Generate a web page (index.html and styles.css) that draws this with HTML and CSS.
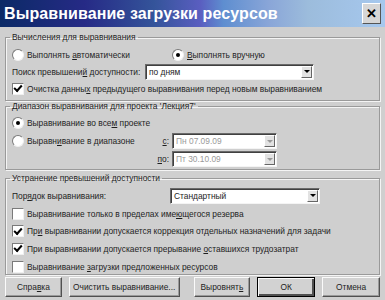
FILE: index.html
```html
<!DOCTYPE html>
<html>
<head>
  <title>Выравнивание загрузки ресурсов</title>
  <meta charset="utf-8">
  <link rel="stylesheet" href="styles.css">
</head>
<body>
  <div class="window">
    <div class="titlebar">
      <span class="title">Выравнивание загрузки ресурсов</span>
      <span class="close">✕</span>
    </div>
    <div class="content">
      <fieldset class="group group-calc">
        <legend>Вычисления для выравнивания</legend>
        <div class="row">
          <span class="option option-wide"><span class="radio"></span><span>Выполнять <u>а</u>втоматически</span></span>
          <span class="option"><span class="radio checked"></span><span><u>В</u>ыполнять вручную</span></span>
        </div>
        <div class="row">
          <span class="label label-search">Поиск превышени<u>й</u> доступности:</span>
          <span class="select select-search"><span class="value">по дням</span><span class="arrow"></span></span>
        </div>
        <div class="row">
          <span class="option"><span class="check checked"></span><span>Очистка данны<u>х</u> предыдущего выравнивания перед новым выравниванием</span></span>
        </div>
      </fieldset>

      <fieldset class="group group-range">
        <legend>Диапазон выравнивания для проекта 'Лекция7'</legend>
        <div class="row">
          <span class="option"><span class="radio checked"></span><span>Выравнивание во все<u>м</u> проекте</span></span>
        </div>
        <div class="row">
          <span class="option option-range"><span class="radio"></span><span>Выравн<u>и</u>вание в диапазоне</span></span>
          <span class="label label-date"><u>с</u>:</span>
          <span class="select select-date disabled"><span class="value">Пн 07.09.09</span><span class="arrow"></span></span>
        </div>
        <div class="row">
          <span class="label label-date label-to"><u>п</u>о:</span>
          <span class="select select-date disabled"><span class="value">Пт 30.10.09</span><span class="arrow"></span></span>
        </div>
      </fieldset>

      <fieldset class="group group-fix">
        <legend>Устранение превышений доступности</legend>
        <div class="row row-order">
          <span class="label label-order">Пор<u>я</u>док выравнивания:</span>
          <span class="select select-order"><span class="value">Стандартный</span><span class="arrow"></span></span>
        </div>
        <div class="row row-check">
          <span class="option"><span class="check"></span><span>Выравнивание только в пределах име<u>ю</u>щегося резерва</span></span>
        </div>
        <div class="row row-check">
          <span class="option"><span class="check checked"></span><span>Пр<u>и</u> выравнивании допускается коррекция отдельных назначений для задачи</span></span>
        </div>
        <div class="row row-check">
          <span class="option"><span class="check checked"></span><span>При выравнивании допускается прерывание <u>о</u>ставшихся трудозатрат</span></span>
        </div>
        <div class="row row-check">
          <span class="option"><span class="check"></span><span>Выравнивание <u>з</u>агрузки предложенных ресурсов</span></span>
        </div>
      </fieldset>

      <div class="buttons">
        <button class="btn btn-help">Спра<u>в</u>ка</button>
        <button class="btn btn-clear">Очистить выравнивание...</button>
        <button class="btn btn-level">Выровнят<u>ь</u></button>
        <button class="btn btn-ok">ОК</button>
        <button class="btn btn-cancel">Отмена</button>
      </div>
    </div>
  </div>
</body>
</html>
```

FILE: styles.css
```css
html, body {
  margin: 0;
  padding: 0;
  background: #cfcfcf;
  font-family: "Liberation Sans", Arial, sans-serif;
  font-size: 8.4px;
  color: #1e1e1e;
}
.window {
  width: 385px;
  height: 300px;
  display: flex;
  flex-direction: column;
  overflow: hidden;
}
.titlebar {
  height: 27px;
  flex: none;
  display: flex;
  align-items: center;
  justify-content: space-between;
  padding: 0 4px 0 4px;
  background: linear-gradient(to right, #0b2a66 0%, #262a86 22%, #34549a 40%, #5a5ec0 52%, #5e8ed0 58%, #8aa6d8 70%, #9cbcdc 80%, #a6c8ee 100%);
}
.title {
  color: #fff;
  font-weight: bold;
  font-size: 16px;
  letter-spacing: 0.1px;
}
.close {
  width: 17px;
  height: 19px;
  display: flex;
  align-items: center;
  justify-content: center;
  background: #d6d6d6;
  border: 1px solid;
  border-color: #fff #555 #555 #fff;
  font-weight: bold;
  font-size: 13px;
  color: #000;
}
.content {
  display: flex;
  flex-direction: column;
  padding: 4px 5px 0 5px;
}
.group {
  margin: 0;
  padding: 3px 6px 3px 6px;
  border: 1px solid #9a9a9a;
  box-shadow: inset 1px 1px 0 #f4f4f4, 1px 1px 0 #f4f4f4;
}
.group legend {
  padding: 0 2px;
  margin-left: -2px;
  line-height: 12px;
}
.group-range {
  margin-top: -1px;
  padding-top: 2px;
  padding-bottom: 1px;
}
.group-fix {
  margin-top: 2px;
  padding-top: 2px;
  padding-bottom: 0;
}
.row {
  height: 17px;
  display: flex;
  align-items: center;
}
.group-range .row {
  height: 18px;
}
.row-order {
  height: 19px;
}
.group .row-check {
  height: 17.5px;
}
.group .row-check:last-child {
  height: 12px;
  margin-top: 3px;
  margin-bottom: 1px;
}
.option {
  display: flex;
  align-items: center;
  white-space: nowrap;
}
.option-wide {
  width: 160px;
}
.option-range {
  width: 141px;
}
.radio {
  width: 10px;
  height: 10px;
  border-radius: 50%;
  background: #fff;
  border: 1px solid #7a7a7a;
  border-right-color: #f0f0f0;
  border-bottom-color: #f0f0f0;
  margin-right: 3px;
  position: relative;
}
.radio.checked::after {
  content: "";
  position: absolute;
  left: 3px;
  top: 3px;
  width: 4px;
  height: 4px;
  border-radius: 50%;
  background: #000;
}
.check {
  width: 10px;
  height: 10px;
  background: #fff;
  border: 1px solid #7a7a7a;
  border-right-color: #f0f0f0;
  border-bottom-color: #f0f0f0;
  margin-right: 3px;
  display: flex;
  align-items: center;
  justify-content: center;
}
.check.checked::after {
  content: "";
  width: 6px;
  height: 3px;
  border-left: 2px solid #000;
  border-bottom: 2px solid #000;
  transform: translateY(-1px) rotate(-48deg);
}
.label {
  white-space: nowrap;
}
.label-search {
  width: 133px;
}
.label-date {
  width: 16px;
  text-align: right;
  margin-right: 3px;
}
.label-to {
  margin-left: 141px;
}
.label-order {
  width: 158px;
}
.select {
  height: 14px;
  display: flex;
  align-items: center;
  justify-content: space-between;
  background: #fff;
  border: 1px solid;
  border-color: #6a6a6a #f4f4f4 #f4f4f4 #6a6a6a;
  box-shadow: inset 1px 1px 0 #404040;
  padding-left: 3px;
}
.select-search {
  width: 164px;
}
.select-date {
  width: 100px;
}
.select-order {
  width: 145px;
}
.select.disabled .value {
  color: #9a9a9a;
}
.arrow {
  width: 11px;
  height: 12px;
  margin-right: 1px;
  background: #e2e2e2;
  border: 1px solid;
  border-color: #fff #666 #666 #fff;
  box-sizing: border-box;
  display: flex;
  align-items: center;
  justify-content: center;
}
.arrow::after {
  content: "";
  border-left: 3px solid transparent;
  border-right: 3px solid transparent;
  border-top: 3px solid #000;
}
.select.disabled .arrow::after {
  border-top-color: #999;
}
.buttons {
  display: flex;
  margin-top: 2px;
  gap: 7px;
}
.btn {
  height: 20px;
  padding: 0;
  white-space: nowrap;
  font-family: "Liberation Sans", Arial, sans-serif;
  font-size: 8.4px;
  color: #1e1e1e;
  background: #d2d2d2;
  border: 1px solid;
  border-color: #fafafa #505050 #505050 #fafafa;
  box-shadow: inset -1px -1px 0 #9a9a9a;
}
.btn-help {
  width: 57px;
}
.btn-clear {
  width: 111px;
}
.btn-level {
  width: 57px;
  margin-left: 7px;
}
.btn-ok {
  width: 58px;
  border: 1px solid #000;
  box-shadow: inset 1px 1px 0 #fafafa, inset -2px -2px 0 #505050;
}
.btn-cancel {
  width: 58px;
}
```
